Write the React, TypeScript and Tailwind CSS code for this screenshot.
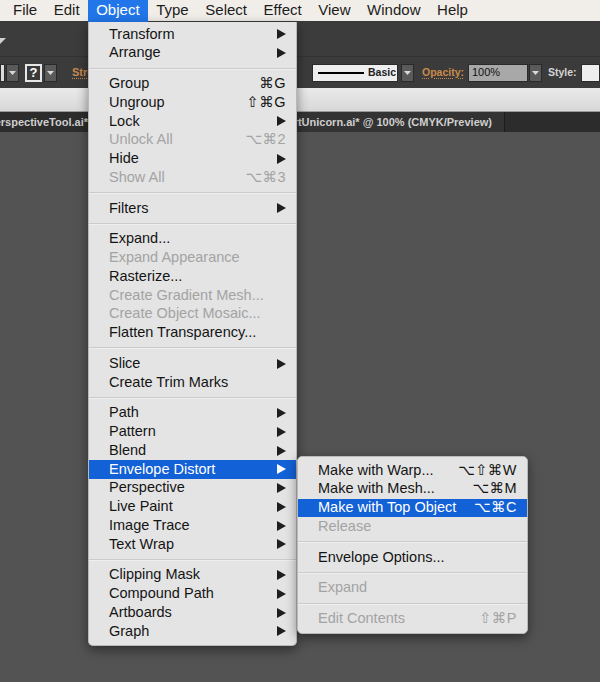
import React from "react";

type Item =
  | { sep: true }
  | {
      sep?: false;
      label: string;
      disabled?: boolean;
      sub?: boolean;
      key?: string;
      active?: boolean;
    };

const objectMenu: Item[] = [
  { label: "Transform", sub: true },
  { label: "Arrange", sub: true },
  { sep: true },
  { label: "Group", key: "⌘G" },
  { label: "Ungroup", key: "⇧⌘G" },
  { label: "Lock", sub: true },
  { label: "Unlock All", key: "⌥⌘2", disabled: true },
  { label: "Hide", sub: true },
  { label: "Show All", key: "⌥⌘3", disabled: true },
  { sep: true },
  { label: "Filters", sub: true },
  { sep: true },
  { label: "Expand..." },
  { label: "Expand Appearance", disabled: true },
  { label: "Rasterize..." },
  { label: "Create Gradient Mesh...", disabled: true },
  { label: "Create Object Mosaic...", disabled: true },
  { label: "Flatten Transparency..." },
  { sep: true },
  { label: "Slice", sub: true },
  { label: "Create Trim Marks" },
  { sep: true },
  { label: "Path", sub: true },
  { label: "Pattern", sub: true },
  { label: "Blend", sub: true },
  { label: "Envelope Distort", sub: true, active: true },
  { label: "Perspective", sub: true },
  { label: "Live Paint", sub: true },
  { label: "Image Trace", sub: true },
  { label: "Text Wrap", sub: true },
  { sep: true },
  { label: "Clipping Mask", sub: true },
  { label: "Compound Path", sub: true },
  { label: "Artboards", sub: true },
  { label: "Graph", sub: true },
];

const envelopeMenu: Item[] = [
  { label: "Make with Warp...", key: "⌥⇧⌘W" },
  { label: "Make with Mesh...", key: "⌥⌘M" },
  { label: "Make with Top Object", key: "⌥⌘C", active: true },
  { label: "Release", disabled: true },
  { sep: true },
  { label: "Envelope Options..." },
  { sep: true },
  { label: "Expand", disabled: true },
  { sep: true },
  { label: "Edit Contents", key: "⇧⌘P", disabled: true },
];

const topMenus = ["File", "Edit", "Object", "Type", "Select", "Effect", "View", "Window", "Help"];

function Arrow({ white }: { white?: boolean }) {
  return (
    <svg width="9" height="10" viewBox="0 0 9 10" className="shrink-0">
      <polygon points="0,0 9,5 0,10" fill={white ? "#ffffff" : "#1e1e1e"} />
    </svg>
  );
}

function MenuRows({ items }: { items: Item[] }) {
  return (
    <>
      {items.map((it, i) =>
        it.sep ? (
          <div key={i} className="h-[12px] flex flex-col justify-center">
            <div className="h-px bg-[#cbcbcb]" />
            <div className="h-px bg-[#efefef]" />
          </div>
        ) : (
          <div
            key={i}
            className={`h-[18.75px] flex items-center justify-between pl-[20px] pr-[10px] ${
              it.active ? "bg-[#1361d6] text-white" : it.disabled ? "text-[#a3a3a3]" : "text-[#141414]"
            }`}
          >
            <span className="whitespace-nowrap">{it.label}</span>
            {it.sub ? (
              <Arrow white={it.active} />
            ) : it.key ? (
              <span className="whitespace-nowrap tracking-[0.5px]">{it.key}</span>
            ) : null}
          </div>
        )
      )}
    </>
  );
}

function DropBtn() {
  return (
    <div className="w-[13px] h-[18px] bg-[#5a5a5a] border border-[#2a2a2a] flex items-center justify-center shrink-0">
      <svg width="7" height="4" viewBox="0 0 7 4">
        <polygon points="0,0 7,0 3.5,4" fill="#d8d8d8" />
      </svg>
    </div>
  );
}

export default function App() {
  return (
    <div
      className="relative w-[600px] h-[682px] overflow-hidden flex flex-col bg-[#535353]"
      style={{ fontFamily: '"Liberation Sans", "DejaVu Sans", Arial, sans-serif' }}
    >
      {/* Menu bar */}
      <div className="h-[22px] shrink-0 bg-[#f1eee9] border-b border-[#3a3a3a] flex items-center pl-[4.7px] text-[15px] text-[#1c1c1c]">
        {topMenus.map((m) => (
          <div
            key={m}
            className={`h-[22px] flex items-center px-[8.3px] ${m === "Object" ? "bg-[#2176e9] text-white" : ""}`}
          >
            {m}
          </div>
        ))}
      </div>

      {/* Toolbar row 1 */}
      <div className="h-[35px] shrink-0 bg-[#3c3c3c] border-b border-[#333333] flex items-center">
        <svg width="6" height="6" viewBox="0 0 6 6" className="mt-[4px]">
          <polygon points="0,0 6,0 0,6" fill="#d0d0d0" />
        </svg>
      </div>

      {/* Toolbar row 2 (control bar) */}
      <div className="h-[31px] shrink-0 bg-[#3b3b3b] flex items-center text-[10.5px] font-bold">
        <div className="w-[5px] h-[18px] bg-[#dcdcdc] border border-[#2a2a2a]" />
        <div className="ml-px">
          <DropBtn />
        </div>
        <div className="ml-[6px] w-[17px] h-[18px] border-2 border-[#e6e6e6] bg-[#3a3a3a] flex items-center justify-center text-white text-[13px] leading-none">
          ?
        </div>
        <div className="ml-[2px]">
          <DropBtn />
        </div>
        <span className="ml-[15px] text-[#c98a4b] underline decoration-dotted underline-offset-2 text-[11px]">Stro</span>
        <div className="flex-1" />
        <div className="w-[86px] h-[18px] bg-[#eeeeee] border border-[#2a2a2a] flex items-center pl-[5px] gap-[4px] shrink-0">
          <div className="w-[46px] h-[2px] bg-black" />
          <span className="text-[#222]">Basic</span>
        </div>
        <div className="ml-[3px]">
          <DropBtn />
        </div>
        <span className="ml-[8px] w-[39px] whitespace-nowrap text-[#c98a4b] underline decoration-dotted underline-offset-2">
          Opacity:
        </span>
        <div className="ml-[7px] w-[60px] h-[18px] bg-[#a8a8a8] border border-[#2a2a2a] flex items-center pl-[3px] text-[#111] font-normal text-[11px] shrink-0">
          100%
        </div>
        <div className="ml-px">
          <DropBtn />
        </div>
        <span className="ml-[6px] w-[27px] whitespace-nowrap text-[#d6d6d6]">Style:</span>
        <div className="ml-[6px] w-[19px] h-[18px] bg-[#eeeeee] border border-[#2a2a2a] shrink-0" />
      </div>

      {/* Light strip */}
      <div className="h-[24px] shrink-0 bg-gradient-to-b from-[#eaeaea] to-[#d8d8d8] border-b border-[#9a9a9a]" />

      {/* Tabs */}
      <div className="h-[20px] shrink-0 bg-[#2c2c2c] flex items-center text-[11px] font-bold text-[#cfcfcf]">
        <div className="h-full flex items-center justify-end w-[94px] overflow-hidden border-r border-[#1c1c1c] pr-[5px]">
          <span className="whitespace-nowrap">PerspectiveTool.ai*</span>
        </div>
        <div className="h-full flex items-center justify-end w-[411px] bg-[#333333] border-r border-[#1c1c1c] overflow-hidden pr-[12px]">
          <span className="whitespace-nowrap">ShirtUnicorn.ai* @ 100% (CMYK/Preview)</span>
        </div>
      </div>

      {/* Canvas */}
      <div className="flex-1 bg-[#535353]" />

      {/* Object menu */}
      <div className="absolute left-[88px] top-[22px] w-[209px] bg-[#e4e4e4] pt-[3px] pb-[4px] rounded-b-[5px] border-x border-b border-[#b9b9b9] shadow-[0_4px_12px_rgba(0,0,0,0.45)] text-[14.5px]">
        <MenuRows items={objectMenu} />
      </div>

      {/* Envelope Distort submenu */}
      <div className="absolute left-[297px] top-[456px] w-[231px] bg-[#e4e4e4] pt-[4px] pb-[5px] rounded-[5px] border border-[#b9b9b9] shadow-[0_4px_12px_rgba(0,0,0,0.45)] text-[14.5px]">
        <MenuRows items={envelopeMenu} />
      </div>
    </div>
  );
}
